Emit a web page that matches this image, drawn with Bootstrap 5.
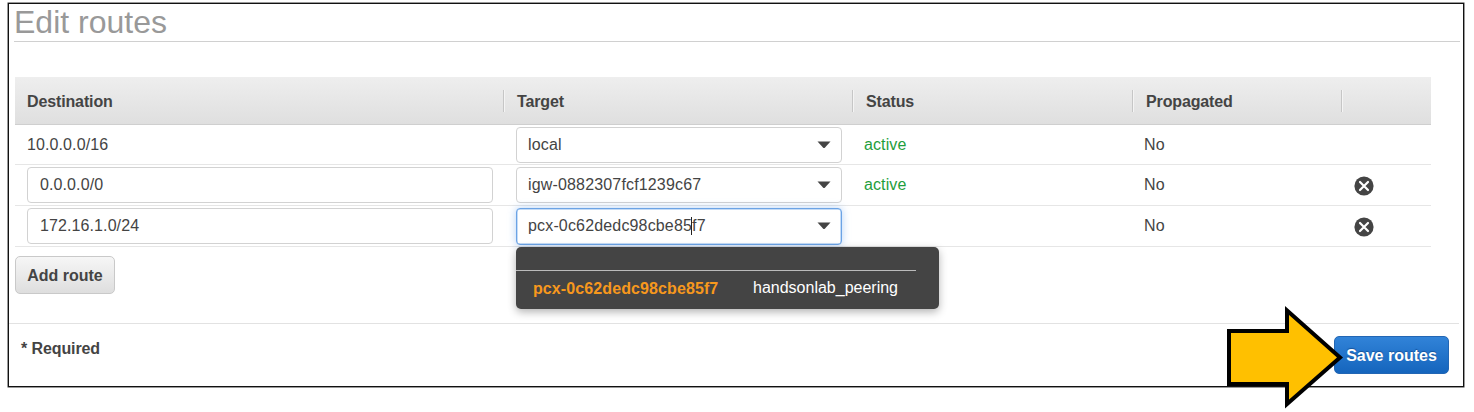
<!DOCTYPE html>
<html lang="en">
<head>
<meta charset="utf-8">
<meta name="viewport" content="width=device-width, initial-scale=1">
<title>Edit routes</title>
<link href="https://cdn.jsdelivr.net/npm/bootstrap@5.3.0/dist/css/bootstrap.min.css" rel="stylesheet">
<style>
body{font-family:"Liberation Sans",Arial,sans-serif;font-size:16px;line-height:20px;color:#444;background:#fff;letter-spacing:.1px;height:412px;padding-top:3px}
.panel{margin:0 10px 0 8px;height:384px;border:1px solid #111;box-shadow:0 0 0 .5px #333}
.page-title{font-size:32px;line-height:36px;font-weight:400;color:#999;height:38px;margin:0 3px 0 5px;border-bottom:1px solid #d0d0d0;letter-spacing:0}
.routes{margin:35px 32px 0 6px}
.route-row{display:grid;grid-template-columns:488px 349px 280px 209px 1fr;height:41px;border-bottom:1px solid #e6e6e6;align-items:center}
.route-row>div{padding-left:12px}
.route-row.first{height:40px}
.route-head{height:48px;background:linear-gradient(#eee,#dfdfdf);border-color:#cfcfcf;font-weight:700;letter-spacing:-.13px}
.route-head>div{line-height:24px;height:22px;border-left:1px solid #c6c6c6;box-shadow:inset 1px 0 #f4f4f4;padding-left:13px}
.route-head>div:first-child{border:0;box-shadow:none;padding-left:12px}
.route-row .form-control{width:466px;height:36px;padding:0 12px;font-size:16px;border:1px solid #d2d2d2;border-radius:4px;color:#444;letter-spacing:.1px}
.combo{width:326px;height:36px;padding:0 10px 0 11px;border:1px solid #d2d2d2;border-radius:4px;background:#fff;margin-left:1px;letter-spacing:.16px}
.combo.active{border-color:#6ba3e5;box-shadow:0 0 8px rgba(75,145,235,.4),inset 0 0 0 .5px #8ab8ee;height:37px}
.caret{width:1px;height:18px;background:#222;margin:0 0 0 -1px}
.text-active{color:#1f9e3c}
.text-active,.propagated{padding-left:13px}
.options{top:39px;left:13px;width:423px;height:62px;background:#444;border-radius:5px;box-shadow:0 3px 9px rgba(0,0,0,.3);z-index:5}
.options-rule{height:24px;width:400px;border-bottom:1px solid #bbb}
.option-id{color:#f7981d;font-weight:700;width:237px;padding-left:17px}
.option-name{margin-top:-1px;letter-spacing:0}
.btn-flat{height:38px;padding:1px 0 0;font-size:16px;line-height:20px;font-weight:700;border-radius:5px;letter-spacing:0}
.btn-add{width:100px;margin:9px 0 0 6px;color:#444;border:1px solid #c9c9c9;background:linear-gradient(#f6f6f6,#dedede)}
.foot{margin:29px 4px 0 0;height:61px;border-top:1px solid #e2e2e2;padding:12px 10px 0 12px}
.required-note{padding-top:3px;letter-spacing:-.1px}
.btn-save{width:115px;color:#fff;border:1px solid #2266b4;background:linear-gradient(#3183d8,#1565bd);text-shadow:0 -1px 1px #17539a}
.remove-cell svg{margin:2px 0 0 1px}
.pointer{left:1220px;top:300px;z-index:6}
</style>
<script src="https://cdn.jsdelivr.net/npm/bootstrap@5.3.0/dist/js/bootstrap.bundle.min.js"></script>
</head>
<body class="position-relative overflow-hidden">
<svg width="0" height="0" class="position-absolute" aria-hidden="true">
<symbol id="arrow" viewBox="0 0 14 8"><path d="M.5.5h13L7.8 6.7q-.8.8-1.6 0z" fill="#444"/></symbol>
<symbol id="remove" viewBox="0 0 20 20"><circle cx="10" cy="10" r="9.6" fill="#444"/><path d="M6 6l8 8M14 6l-8 8" stroke="#fff" stroke-width="2.2" stroke-linecap="round"/></symbol>
</svg>
<main class="panel">
<h1 class="page-title">Edit routes</h1>
<section class="routes">
<div class="route-row route-head"><div>Destination</div><div>Target</div><div>Status</div><div>Propagated</div><div></div></div>
<div class="route-row first">
<div>10.0.0.0/16</div>
<div><div class="combo d-flex align-items-center justify-content-between"><span>local</span><svg width="14" height="8"><use href="#arrow"/></svg></div></div>
<div class="text-active">active</div><div class="propagated">No</div><div></div>
</div>
<div class="route-row">
<div><input class="form-control" value="0.0.0.0/0" aria-label="Destination"></div>
<div><div class="combo d-flex align-items-center justify-content-between"><span>igw-0882307fcf1239c67</span><svg width="14" height="8"><use href="#arrow"/></svg></div></div>
<div class="text-active">active</div><div class="propagated">No</div><div class="remove-cell d-flex"><svg width="20" height="20"><use href="#remove"/></svg></div>
</div>
<div class="route-row">
<div><input class="form-control" value="172.16.1.0/24" aria-label="Destination"></div>
<div class="position-relative"><div class="combo active d-flex align-items-center justify-content-between"><span class="d-flex align-items-center"><span>pcx-0c62dedc98cbe85</span><i class="caret"></i><span>f7</span></span><svg width="14" height="8"><use href="#arrow"/></svg></div>
<div class="options position-absolute"><div class="options-rule"></div><div class="d-flex pt-1 mt-1"><span class="option-id">pcx-0c62dedc98cbe85f7</span><span class="option-name text-white">handsonlab_peering</span></div></div></div>
<div></div><div class="propagated">No</div><div class="remove-cell d-flex"><svg width="20" height="20"><use href="#remove"/></svg></div>
</div>
</section>
<button class="btn btn-flat btn-add d-block" type="button">Add route</button>
<footer class="foot d-flex justify-content-between"><strong class="required-note">* Required</strong><button class="btn btn-flat btn-save" type="button">Save routes</button></footer>
</main>
<svg class="pointer position-absolute" width="130" height="112" viewBox="0 0 130 112"><path d="M9 31H67V10.500L120 57.500 67 104V84H9Z" fill="#ffc000" stroke="#000" stroke-width="4"/></svg>
</body>
</html>
